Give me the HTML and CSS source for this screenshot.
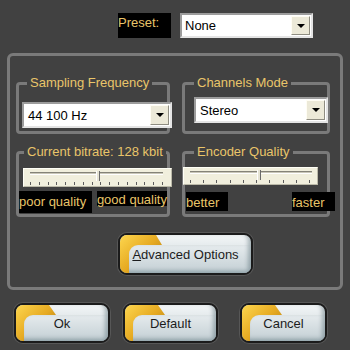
FILE: index.html
```html
<!DOCTYPE html>
<html lang="en">

<head>
    <meta charset="UTF-8">
    <title>Encoder Settings</title>
    <link rel="stylesheet" href="styles.css">
</head>

<body>
    <div class="preset-row">
        <div class="preset-label">Preset:</div>
        <div class="combo combo-preset">
            <span class="combo-text">None</span>
            <span class="combo-btn"></span>
        </div>
    </div>

    <div class="panel">
        <div class="groups">
            <fieldset class="group group-left">
                <legend>Sampling Frequency</legend>
                <div class="combo combo-sampling">
                    <span class="combo-text">44 100 Hz</span>
                    <span class="combo-btn"></span>
                </div>
            </fieldset>

            <fieldset class="group group-right">
                <legend>Channels Mode</legend>
                <div class="combo combo-channels">
                    <span class="combo-text">Stereo</span>
                    <span class="combo-btn"></span>
                </div>
            </fieldset>

            <fieldset class="group group-left group-bitrate">
                <legend>Current bitrate: 128 kbit</legend>
                <div class="slider slider-bitrate">
                    <div class="groove"></div>
                    <div class="ticks">
                        <i></i><i></i><i></i><i></i><i></i><i></i><i></i><i></i>
                        <i></i><i></i><i></i><i></i><i></i><i></i><i></i><i></i>
                    </div>
                    <span class="thumb"></span>
                </div>
                <div class="quality-labels">
                    <span class="qlabel qlabel-poor">poor quality</span>
                    <span class="qlabel qlabel-good">good quality</span>
                </div>
            </fieldset>

            <fieldset class="group group-right group-encoder">
                <legend>Encoder Quality</legend>
                <div class="slider slider-encoder">
                    <div class="groove"></div>
                    <div class="ticks">
                        <i></i><i></i><i></i><i></i><i></i><i></i><i></i><i></i><i></i><i></i>
                    </div>
                    <span class="thumb"></span>
                </div>
                <div class="quality-labels">
                    <span class="qlabel">better</span>
                    <span class="qlabel">faster</span>
                </div>
            </fieldset>
        </div>

        <button class="skin-btn btn-advanced"><span class="face"><u>A</u>dvanced Options</span></button>
    </div>

    <div class="bottom-row">
        <button class="skin-btn btn-ok"><span class="face">Ok</span></button>
        <button class="skin-btn btn-default"><span class="face">Default</span></button>
        <button class="skin-btn btn-cancel"><span class="face">Cancel</span></button>
    </div>
</body>

</html>
```

FILE: styles.css
```css
body {
    margin: 0;
    width: 350px;
    height: 350px;
    overflow: hidden;
    background: #414141;
    font-family: "Liberation Sans", Arial, sans-serif;
    font-size: 13px;
}

/* preset row */
.preset-row {
    display: flex;
    gap: 9px;
    padding: 13px 0 0 118px;
}

.preset-label {
    box-sizing: border-box;
    width: 53px;
    height: 25px;
    padding-top: 2px;
    line-height: 16px;
    background: #000;
    color: #e9c56a;
}

/* combo boxes */
.combo {
    box-sizing: border-box;
    display: flex;
    align-items: center;
    height: 26px;
    background: #fff;
    color: #000;
    border: 2px solid;
    border-color: #9c9c9c #e4e4e4 #e4e4e4 #9c9c9c;
}

.combo-text {
    flex: 1;
    padding-left: 4px;
    white-space: nowrap;
}

.combo-btn {
    box-sizing: border-box;
    align-self: stretch;
    width: 19px;
    margin: 1px;
    background: #ece9d8;
    border: 1px solid;
    border-color: #fffdf4 #8f8d82 #8f8d82 #fffdf4;
    display: flex;
    align-items: center;
    justify-content: center;
}

.combo-btn::after {
    content: "";
    border-left: 4px solid transparent;
    border-right: 4px solid transparent;
    border-top: 4px solid #000;
}

.combo-preset {
    width: 133px;
    height: 25px;
}

.combo-preset .combo-text {
    padding-left: 3px;
}

.combo-sampling {
    width: 150px;
    margin: 11px 0 0 3px;
}

.combo-channels {
    width: 134px;
    margin: 6px 0 0 9px;
}

/* main panel */
.panel {
    box-sizing: border-box;
    width: 336px;
    height: 237px;
    margin: 15px 0 0 7px;
    padding: 19px 10px 12px 6px;
    border: 3px solid #7a7a7a;
    border-radius: 6px;
}

.groups {
    display: grid;
    grid-template-columns: 154px 148px;
    column-gap: 12px;
    row-gap: 10px;
}

.group {
    margin: 0;
    padding: 0 0 3px;
    min-width: 0;
    border: 3px solid #7a7a7a;
    border-radius: 4px;
}

.group legend {
    padding: 0 3px;
    line-height: 16px;
    color: #e9c56a;
    white-space: nowrap;
}

.group-left legend {
    margin-left: 8px;
}

.group-right legend {
    margin-left: 9px;
}

.group-bitrate legend {
    margin-left: 5px;
}

.group-bitrate {
    padding-bottom: 1px;
}

/* sliders */
.slider {
    position: relative;
    box-sizing: border-box;
    height: 19px;
    background: #f1efdd;
    border: 1px solid;
    border-color: #fffff6 #bbb9a8 #bbb9a8 #fffff6;
}

.groove {
    height: 1px;
    margin-top: 3px;
    background: #c9c7b8;
    border-top: 1px solid #858378;
    border-bottom: 1px solid #fff;
}

.ticks {
    display: flex;
    justify-content: space-between;
    margin-top: 7px;
}

.ticks i {
    width: 1px;
    height: 3px;
    background: #5c5c5c;
}

.thumb {
    position: absolute;
    top: 2px;
    width: 2px;
    height: 10px;
    background: #e6e4d4;
    border-left: 1px solid #fff;
    border-right: 1px solid #6a6a6a;
}

.slider-bitrate {
    width: 149px;
    margin: 8px 0 0 4px;
}

.slider-bitrate .groove,
.slider-bitrate .ticks {
    margin-left: 6px;
    margin-right: 8px;
}

.slider-bitrate .thumb {
    left: 72px;
}

.slider-encoder {
    width: 135px;
    height: 18px;
    margin: 7px 0 0 -2px;
}

.slider-encoder .groove {
    margin-left: 6px;
    margin-right: 5px;
}

.slider-encoder .ticks {
    margin: 6px 7px 0 6px;
}

.slider-encoder .thumb {
    left: 73px;
}

/* quality labels */
.quality-labels {
    display: flex;
    gap: 5px;
    margin-top: 4px;
}

.qlabel {
    height: 19px;
    padding-top: 3px;
    box-sizing: border-box;
    line-height: 16px;
    background: #000;
    color: #e9c56a;
    white-space: nowrap;
}

.qlabel-poor {
    width: 77px;
    height: 22px;
}

.qlabel-good {
    width: 71px;
    height: 15px;
    padding-top: 1px;
}

.group-encoder .quality-labels {
    justify-content: space-between;
    width: 149px;
    margin: 7px 0 0 1px;
}

.group-encoder .qlabel {
    width: 42px;
}

.group-encoder .qlabel + .qlabel {
    width: 43px;
}

/* skinned buttons */
.skin-btn {
    position: relative;
    box-sizing: border-box;
    display: flex;
    padding: 10px 0 0 8px;
    border: 2px solid #1b1b1b;
    border-radius: 9px;
    background: linear-gradient(#f3f6f7, #c3cfd4);
    box-shadow: 0 0 0 1px #575757, inset -3px -2px 4px rgba(60, 84, 96, 0.4);
    font: inherit;
    color: #1c1c1c;
    overflow: hidden;
    cursor: pointer;
}

.skin-btn::before {
    content: "";
    position: absolute;
    left: 0;
    top: 0;
    bottom: 0;
    width: 40px;
    background: linear-gradient(135deg, #fdd64e, #e6aa22 50%, #a87412);
    clip-path: polygon(0 0, 33px 0, 40px 10px, 40px 100%, 0 100%);
}

.skin-btn .face {
    position: relative;
    flex: 1;
    display: flex;
    align-items: center;
    justify-content: center;
    padding: 0 8px 10px 0;
    border-top-left-radius: 9px;
    background: linear-gradient(#f3f6f7, #c3cfd4) 0 -10px / 100% calc(100% + 10px);
    box-shadow: inset -3px -2px 4px rgba(60, 84, 96, 0.4);
}

.btn-advanced {
    width: 135px;
    height: 42px;
    margin: 16px 0 0 102px;
    padding-left: 9px;
}

.btn-advanced::before {
    width: 42px;
    clip-path: polygon(0 0, 36px 0, 42px 10px, 42px 100%, 0 100%);
}

.btn-advanced .face {
    padding-right: 9px;
}

.bottom-row {
    display: flex;
    margin-top: 13px;
    padding-left: 14px;
}

.bottom-row .skin-btn {
    height: 40px;
}

.btn-ok {
    width: 96px;
}

.btn-default {
    width: 95px;
    margin-left: 13px;
}

.btn-cancel {
    width: 87px;
    margin-left: 22px;
}
```
